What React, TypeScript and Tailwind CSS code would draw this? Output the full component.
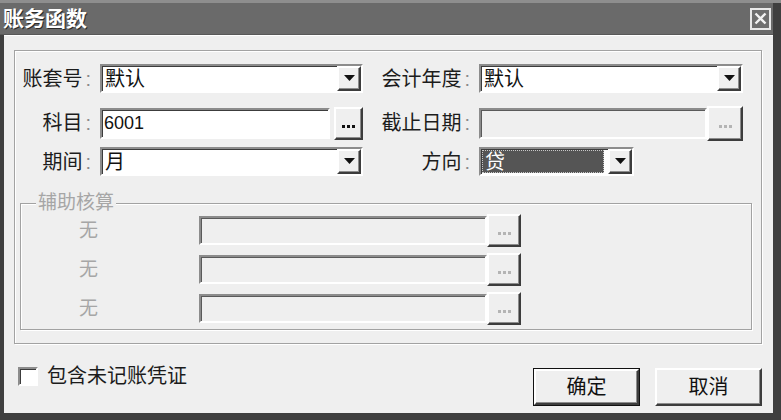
import React from 'react';

// 3D borders in the classic Windows style
const sunken =
  'border-2 border-t-[#8c8c8c] border-l-[#8c8c8c] border-b-white border-r-white shadow-[inset_1px_1px_0_#3c3c3c]';
const sunkenDisabled =
  'border-2 border-t-[#8c8c8c] border-l-[#8c8c8c] border-b-white border-r-white shadow-[inset_1px_1px_0_#5a5a5a]';
const raised =
  'border-2 border-t-white border-l-white border-b-[#3c3c3c] border-r-[#3c3c3c] shadow-[inset_-1px_-1px_0_#8c8c8c]';

const Arrow: React.FC = () => (
  <svg width="11" height="7" viewBox="0 0 11 7">
    <path d="M0 0 H11 L5.5 6 Z" fill="#111" />
  </svg>
);

const Label: React.FC<{ text: string; className: string }> = ({ text, className }) => (
  <div className={`flex items-center justify-end pr-[9px] text-[20px] leading-none text-[#1c1c1c] ${className}`}>
    {text}
    <span className="ml-[3px] text-[#8a8a8a]">:</span>
  </div>
);

interface SelectProps {
  value: string;
  className: string;
  selected?: boolean;
}

const Select: React.FC<SelectProps> = ({ value, className, selected }) => (
  <div className={`flex h-[29px] bg-white ${sunken} ${className}`}>
    <div className="flex flex-1 items-center p-[1px]">
      {selected ? (
        <div className="flex h-full w-[122px] items-center border border-dotted border-[#c8c8c8] bg-[#555555] pl-[2px] text-[20px] leading-none text-white">
          {value}
        </div>
      ) : (
        <div className="pl-[2px] text-[20px] leading-none text-[#111]">{value}</div>
      )}
    </div>
    <div className={`flex w-[24px] items-center justify-center bg-[#efefef] ${raised}`}>
      <Arrow />
    </div>
  </div>
);

const Dots: React.FC<{ disabled?: boolean }> = ({ disabled }) => (
  <div className="flex gap-[2px] pt-[6px]">
    {[0, 1, 2].map(i => (
      <div key={i} className={`h-[3px] w-[3px] ${disabled ? 'bg-[#b4b4b4]' : 'bg-[#111]'}`} />
    ))}
  </div>
);

const DotButton: React.FC<{ className: string; disabled?: boolean }> = ({ className, disabled }) => (
  <div className={`flex items-center justify-center bg-[#efefef] ${raised} ${className}`}>
    <Dots disabled={disabled} />
  </div>
);

const App: React.FC = () => {
  return (
    <div className="flex h-[420px] w-[781px] flex-col border-t-[3px] border-[#8e8e8e] bg-[#3f3f3f] pb-[7px] pr-[8px] font-['Liberation_Sans','Noto_Sans_CJK_SC',sans-serif]">
      {/* title bar */}
      <div className="flex h-[32px] items-center justify-between border-b border-[#585858] bg-[#6a6a6a] pl-[3px] pr-[2px]">
        <div className="text-[21px] font-bold leading-none text-white [text-shadow:1px_1px_0_#2a2a2a]">账务函数</div>
        <div className="flex h-[22px] w-[21px] items-center justify-center border-2 border-[#e8e8e8] bg-[#6e6e6e]">
          <svg width="13" height="13" viewBox="0 0 13 13">
            <path d="M1.5 1.5 L11.5 11.5 M11.5 1.5 L1.5 11.5" stroke="#f2f2f2" strokeWidth="2.4" />
          </svg>
        </div>
      </div>

      {/* body */}
      <div className="ml-[4px] flex flex-1 flex-col border-t border-white bg-[#efefef] pl-[10px]">
        <div className="mt-[14px] flex h-[294px] w-[748px] flex-col border border-[#a2a2a2] shadow-[inset_1px_1px_0_#ffffff,1px_1px_0_#ffffff]">
          {/* row 1 */}
          <div className="mt-[13px] flex h-[29px] items-center">
            <Label text="账套号" className="w-[85px]" />
            <Select value="默认" className="w-[263px]" />
            <Label text="会计年度" className="w-[116px]" />
            <Select value="默认" className="w-[264px]" />
          </div>

          {/* row 2 */}
          <div className="mt-[13px] flex h-[34px] items-center">
            <Label text="科目" className="w-[85px]" />
            <div className={`flex h-[31px] w-[230px] items-center bg-white pl-[2px] text-[18px] leading-none text-[#111] ${sunken}`}>
              6001
            </div>
            <DotButton className="ml-[4px] h-[33px] w-[29px]" />
            <Label text="截止日期" className="w-[116px]" />
            <div className={`h-[31px] w-[228px] bg-[#efefef] ${sunkenDisabled}`} />
            <DotButton className="h-[35px] w-[36px]" disabled />
          </div>

          {/* row 3 */}
          <div className="mt-[7px] flex h-[29px] items-center">
            <Label text="期间" className="w-[85px]" />
            <Select value="月" className="w-[263px]" />
            <Label text="方向" className="w-[116px]" />
            <Select value="贷" className="w-[155px]" selected />
          </div>

          {/* 辅助核算 group */}
          <div className="relative ml-[5px] mt-[27px] flex h-[127px] w-[732px] flex-col gap-[6px] border border-[#a2a2a2] pt-[10px] shadow-[inset_1px_1px_0_#ffffff,1px_1px_0_#ffffff]">
            <div className="absolute -top-[11px] left-[15px] bg-[#efefef] px-[2px] text-[19px] leading-none text-[#a6a6a6]">
              辅助核算
            </div>
            {[0, 1, 2].map(i => (
              <div key={i} className="flex h-[33px] items-center">
                <div className="w-[178px] pl-[58px] text-[19px] leading-none text-[#a6a6a6]">无</div>
                <div className={`h-[29px] w-[288px] bg-[#efefef] ${sunkenDisabled}`} />
                <DotButton className="h-[33px] w-[34px]" disabled />
              </div>
            ))}
          </div>
        </div>

        {/* bottom row */}
        <div className="mt-[22px] flex w-[748px] items-start">
          <div className="flex items-center pl-[4px]">
            <div className={`h-[19px] w-[20px] bg-white ${sunken}`} />
            <div className="ml-[9px] text-[20px] leading-none text-[#1c1c1c]">包含未记账凭证</div>
          </div>
          <div className="ml-auto mt-[2px] flex gap-[15px]">
            <div className="border border-[#111]">
              <div className={`flex h-[36px] w-[105px] items-center justify-center bg-[#efefef] text-[20px] leading-none text-[#111] ${raised}`}>
                确定
              </div>
            </div>
            <div className={`flex h-[38px] w-[107px] items-center justify-center bg-[#efefef] text-[20px] leading-none text-[#111] ${raised}`}>
              取消
            </div>
          </div>
        </div>
      </div>
    </div>
  );
};

export default App;
